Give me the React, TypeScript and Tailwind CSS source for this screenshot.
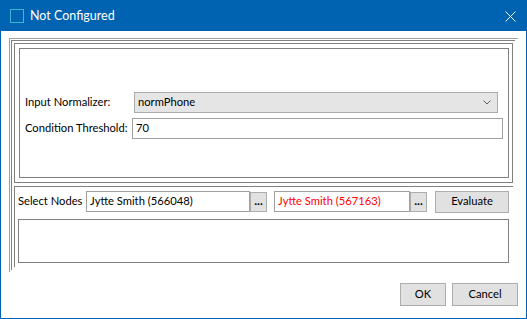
import React from 'react';

const font = { fontFamily: 'Lato, "Noto Sans", "Liberation Sans", sans-serif' };

const DotsButton: React.FC = () => (
    <button className="w-[17px] h-[20px] bg-[#e1e1e1] border border-[#adadad] text-[12px] font-bold leading-none flex items-end justify-center pb-[4px]">
        ...
    </button>
);

export default function App() {
    return (
        <div
            className="w-[527px] h-[319px] border border-[#0063b1] bg-white flex flex-col text-[11.2px] text-black whitespace-nowrap"
            style={font}
        >
            {/* Title bar */}
            <div className="h-[30px] bg-[#0063b1] flex items-center pl-[9px] pr-[9px] text-white shrink-0">
                <div className="w-[14px] h-[14px] border border-[#3fb6d3] mr-[6px]" />
                <span className="text-[12.5px] leading-none">Not Configured</span>
                <div className="flex-1" />
                <svg width="11" height="11" viewBox="0 0 11 11" className="mr-[1px]">
                    <path d="M0.5 0.5 L10.5 10.5 M10.5 0.5 L0.5 10.5" stroke="white" strokeWidth="1" />
                </svg>
            </div>

            {/* Body */}
            <div className="flex flex-col pl-[8px] pt-[7px]">
                {/* Outer split frame */}
                <div className="w-[509px] h-[234px] border-t border-l border-[#a0a0a0] p-[1px]">
                    <div className="w-[504px] h-[230px] border-t border-l border-[#808080] pl-[2px] pt-[2px]">
                        {/* Top pane */}
                        <div className="w-[499px] h-[140px] border border-[#808080] p-[4px]">
                            <div className="w-[490px] h-[130px] border border-[#808080] pt-[43px] pl-[5px] pr-[5px]">
                                <div className="flex items-center h-[21px]">
                                    <span className="w-[109px] shrink-0">Input Normalizer:</span>
                                    <div className="flex-1 mr-[5px] h-[21px] bg-[#e5e5e5] border border-[#acacac] flex items-center pl-[3px] pr-[6px]">
                                        <span className="flex-1">normPhone</span>
                                        <svg width="8" height="5" viewBox="0 0 8 5">
                                            <path d="M0.5 0.5 L4 4 L7.5 0.5" stroke="#606060" fill="none" strokeWidth="1" />
                                        </svg>
                                    </div>
                                </div>
                                <div className="flex items-center h-[21px] mt-[5px]">
                                    <span className="w-[107px] shrink-0">Condition Threshold:</span>
                                    <div className="flex-1 h-[21px] bg-white border border-[#a0a0a0] flex items-center pl-[3px]">
                                        70
                                    </div>
                                </div>
                            </div>
                        </div>

                        {/* Bottom pane */}
                        <div className="w-[499px] h-[81px] mt-[3px] border-t border-l border-[#808080] pl-[3px] pt-[4px]">
                            <div className="flex items-center h-[21px]">
                                <span className="w-[68px] shrink-0">Select Nodes</span>
                                <div className="w-[164px] h-[21px] border border-[#a0a0a0] flex items-center pl-[3px]">
                                    Jytte Smith (566048)
                                </div>
                                <DotsButton />
                                <div className="w-[136px] h-[21px] ml-[7px] border border-[#a0a0a0] flex items-center pl-[3px] text-[#ff0000]">
                                    Jytte Smith (567163)
                                </div>
                                <DotsButton />
                                <button className="ml-[8px] w-[74px] h-[22px] bg-[#e1e1e1] border border-[#adadad] flex items-center justify-center">
                                    Evaluate
                                </button>
                            </div>
                            <div className="mt-[7px] w-[491px] h-[44px] border border-[#808080]" />
                        </div>
                    </div>
                </div>
            </div>

            {/* Footer buttons */}
            <div className="flex justify-end gap-[6px] pr-[8px] mt-[11px]">
                <button className="w-[46px] h-[23px] bg-[#e1e1e1] border border-[#adadad] flex items-center justify-center">
                    OK
                </button>
                <button className="w-[66px] h-[23px] bg-[#e1e1e1] border border-[#adadad] flex items-center justify-center">
                    Cancel
                </button>
            </div>
        </div>
    );
}
